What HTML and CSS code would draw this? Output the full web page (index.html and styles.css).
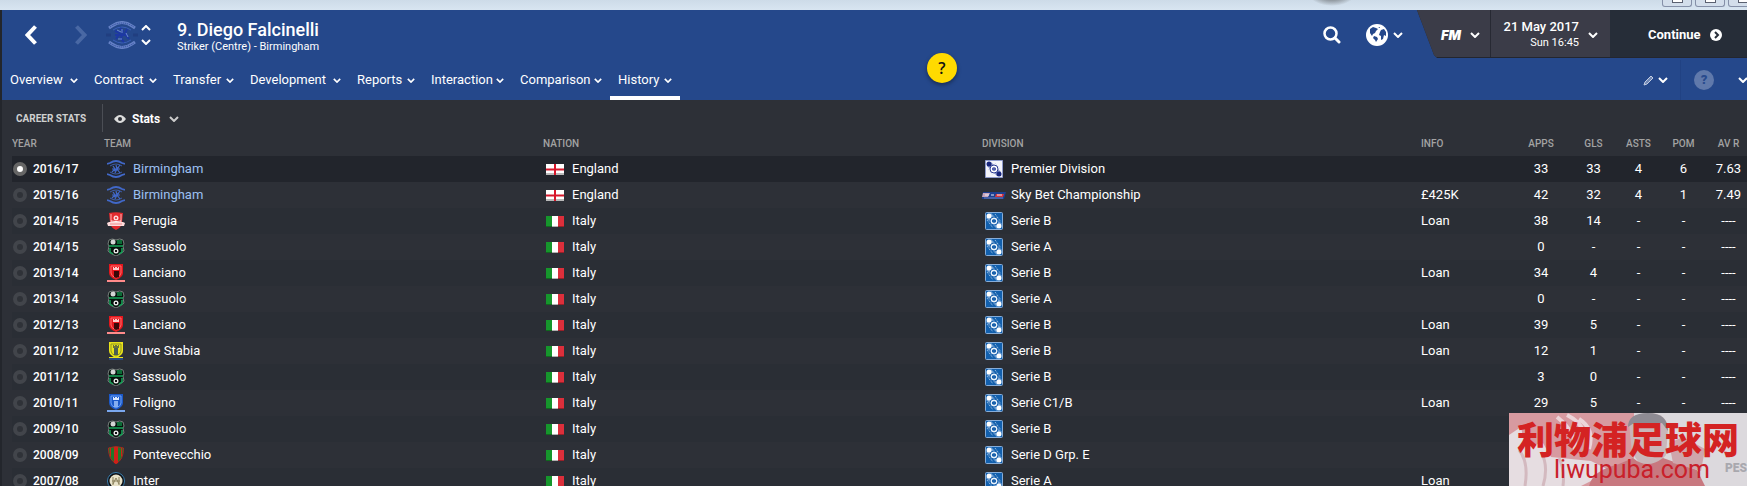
FILE: index.html
```
<!DOCTYPE html>
<html lang="en">
<head>
  <meta charset="UTF-8">
  <meta name="viewport" content="width=device-width, initial-scale=1.0">
  <title>Diego Falcinelli - History</title>
  <link rel="stylesheet" href="styles.css">
</head>
<body>

<!-- shared icons -->
<svg class="sprite" width="0" height="0" aria-hidden="true">
  <symbol id="chev" viewBox="0 0 10 6"><path d="M1 1l4 4 4-4" fill="none" stroke="currentColor" stroke-width="2"/></symbol>
  <symbol id="birmingham" viewBox="0 0 18 18">
    <g fill="none" stroke="#4168c8">
      <path d="M0 4l3-1q6-4 12 0l3 1M0 14l3 1q6 4 12 0l3-1" stroke-width="1.800"/>
      <path d="M3 6q6-4 12 0M3 12q6 4 12 0" stroke-width=".8"/>
      <path d="M6 6l2 3-3 3M9 5l1 4-2 4M13 5l-3 4 3 4M5 9h8M7 11l5-4" stroke-width="1.200"/>
    </g>
  </symbol>
  <symbol id="perugia" viewBox="0 0 18 18">
    <path d="M2 1q7-1.500 14 0l-1 9q0 5-6 8-6-3-6-8z" fill="#e32a2e"/>
    <path d="M4 2v8M14 2v8" stroke="#ffb3b3"/><path d="M4 9q5 1 10 0" stroke="#fff" fill="none"/>
    <circle cx="9" cy="6" r="2.500" fill="#ffd9d9"/><circle cx="9" cy="6" r="1" fill="#e0282c"/>
    <path d="M0 11l2-1h14l2 1-1 3H1z" fill="#ffdcdc"/><path d="M3 12h12" stroke="#f08a8c"/>
  </symbol>
  <symbol id="sassuolo" viewBox="0 0 18 18">
    <path d="M2 2q3-2 7 0 4-2 7 0l1 4-1 2 1 5q-3 3-8 5-5-2-8-5l1-5-1-2z" fill="#06130d" stroke="#777f7c"/>
    <path d="M10 2h5v4h-5z" fill="#0d6b37"/><circle cx="6" cy="4" r="2.500" fill="#d5d5d5"/>
    <path d="M2 8h14M3 10v4l3 2M15 10v4l-3 2" stroke="#17a55a" stroke-width="1.500" fill="none"/>
    <circle cx="9" cy="13" r="2.500" fill="#e8e8e8"/><path d="M8 12l2 2M8 14l2-2" stroke="#111"/>
  </symbol>
  <symbol id="lanciano" viewBox="0 0 18 18">
    <path d="M2 0h14v9q0 4-7 7-7-3-7-7z" fill="#e4161c"/><path d="M4 2h10v7q0 3-5 5-5-2-5-5z" fill="none" stroke="#ff6d6d"/>
    <path d="M7 7h5v6l-3 1-2-1z" fill="#3a0808"/><path d="M6 3h1v1h1V3h2v1h1V3h1v3H6z" fill="#ffc9c9"/>
    <path d="M0 16h18v2H0z" fill="#ff8b8b"/>
  </symbol>
  <symbol id="stabia" viewBox="0 0 18 18">
    <path d="M2 0h14v9q0 4-7 7-7-3-7-7z" fill="#e8e21c"/><path d="M4 2h10v7q0 3-5 5-5-2-5-5z" fill="none" stroke="#8f941d"/>
    <path d="M7 6h4v7H7z" fill="#4a5d54"/><path d="M6 3h1v1h1V3h2v1h1V3h1v3H6z" fill="#6b7338"/>
    <path d="M2 15h14v1H2z" fill="#e8e21c"/><path d="M2 16h14v2H2z" fill="#28487e"/>
  </symbol>
  <symbol id="foligno" viewBox="0 0 18 18">
    <path d="M2 0h14v9q0 4-7 7-7-3-7-7z" fill="#1b58c8"/><path d="M4 2h10v7q0 3-5 5-5-2-5-5z" fill="none" stroke="#6fa2f4"/>
    <path d="M7 7h4v6H7z" fill="#86aef0"/><path d="M6 3h1v1h1V3h2v1h1V3h1v3H6z" fill="#dce9ff"/>
    <path d="M0 16h18v2H0z" fill="#7aa7ee"/>
  </symbol>
  <symbol id="pontevecchio" viewBox="0 0 18 18">
    <path d="M1.500 2Q9-1 16.500 2q0 12-7.500 15.500Q1.500 14 1.500 2z" fill="#1d7a2a" stroke="#a8291f"/>
    <path d="M7 1h4v16l-2 1-2-1zM3 2h1v9l-1-1zM14 2h1v8l-1 1z" fill="#cf2018"/>
  </symbol>
  <symbol id="inter" viewBox="0 0 18 18">
    <circle cx="9" cy="9" r="8.500" fill="#0b0d12" stroke="#3b7fae"/><circle cx="9" cy="9" r="6.500" fill="#e8e2c8"/>
    <path d="M6 5v8M12 5v8M6 12l3-6 3 6M5 9h8" stroke="#8b815c" fill="none"/>
  </symbol>
  <symbol id="england" viewBox="0 0 18 11">
    <path d="M0 0h18v11H0z" fill="#fff"/><path d="M0 9h18v2H0z" fill="#b9b9b9"/>
    <path d="M0 5.500h18M9 0v11" stroke="#d8182c" stroke-width="2"/>
  </symbol>
  <symbol id="italy" viewBox="0 0 18 11">
    <path d="M0 0h6v11H0z" fill="#16962c"/><path d="M6 0h6v11H6z" fill="#fff"/><path d="M12 0h6v11h-6z" fill="#dc2f3b"/>
    <path d="M0 10h18v1H0z" fill="#000" opacity=".3"/>
  </symbol>
  <symbol id="premier" viewBox="0 0 18 18">
    <path d="M.5.5h17v17H.5z" fill="#f4f5fb" stroke="#8f9bcb"/>
    <path d="M2 6l4-4 10 10-4 4z" fill="#8d99cb"/>
    <path d="M3 9l5 6M10 3l5 6" stroke="#c9cfe8" stroke-dasharray="1 1"/>
    <circle cx="4" cy="4" r="2.500" fill="#17257c"/><circle cx="14" cy="14" r="2.500" fill="#17257c"/>
    <circle cx="9" cy="9" r="4" fill="#fff" stroke="#2c3c93"/><path d="M9 7l2 1v2l-2 1-2-1V8z" fill="#5361ad"/>
  </symbol>
  <symbol id="serie" viewBox="0 0 18 18">
    <rect x=".5" y=".5" width="17" height="17" rx="1" fill="#1260ae" stroke="#86add9"/>
    <path d="M1 6l5-5 11 11-5 5z" fill="#6f9fd3"/>
    <path d="M2 8l6 8M10 2l6 8" stroke="#b5cfea" stroke-dasharray="1 1"/>
    <circle cx="4" cy="4" r="2.500" fill="#fff"/><circle cx="14" cy="14" r="2.500" fill="#fff"/>
    <circle cx="9" cy="9" r="4" fill="#e6f0fa" stroke="#1b62ad"/><path d="M9 7l2 1v2l-2 1-2-1V8z" fill="#1b62ad"/>
  </symbol>
  <symbol id="skybet" viewBox="0 0 24 7">
    <path d="M1 0h23l-2 7H0z" fill="#1c3f8f"/><path d="M1 1h7L6 5H0z" fill="#c8a5bb"/>
    <path d="M14 2h8l-1 3h-8z" fill="#d9333b"/><path d="M3 3h4M9 3h3M15 3h5" stroke="#e8ecf8"/>
    <path d="M2 6h19" stroke="#6c82bd"/>
  </symbol>
</svg>

<div class="titlebar">
  <span class="orb"></span>
  <div class="window-buttons">
    <button aria-label="Minimise"><i></i></button>
    <button aria-label="Maximise"><i></i></button>
    <button aria-label="Close"><i></i></button>
  </div>
</div>

<header>
  <div class="top">
    <button class="back" aria-label="Back"><svg width="12" height="20" viewBox="0 0 12 20"><path d="M10.500 1.500L2.500 10l8 8.500" fill="none" stroke="currentColor" stroke-width="4"/></svg></button>
    <button class="forward" aria-label="Forward"><svg width="12" height="20" viewBox="0 0 12 20"><path d="M1.500 1.500l8 8.500-8 8.500" fill="none" stroke="currentColor" stroke-width="4"/></svg></button>
    <svg class="club" width="32" height="28" viewBox="0 0 32 28">
      <g fill="none" stroke="#6682c6">
        <path d="M3 7l3-2q10-7 20 0l3 2M3 21l3 2q10 7 20 0l3-2" stroke-width="3"/>
        <path d="M4 6Q16-2 28 6M4 22q12 8 24 0" stroke="#28469a" stroke-dasharray="1 1"/>
        <path d="M7 9q9-6 18 0M7 19q9 6 18 0" stroke="#3a5fb9"/>
        <path d="M9 10l5 2-4 6M14 7l3 3-2 8 3 3M21 8l-2 5 4 5M9 14h13" stroke="#1d38a4" stroke-width="2"/>
        <path d="M11 9l4 2M16 8v4M20 12l2 4M12 18h4" stroke="#6f8cd0"/>
        <path d="M0 14h5M27 14h5" stroke="#213e80" stroke-width="3"/>
      </g>
    </svg>
    <div class="switch">
      <button aria-label="Previous player"><svg class="flip" width="10" height="6"><use href="#chev"/></svg></button>
      <button aria-label="Next player"><svg width="10" height="6"><use href="#chev"/></svg></button>
    </div>
    <div class="player">
      <h1>9. Diego Falcinelli</h1>
      <p>Striker (Centre) - Birmingham</p>
    </div>

    <button class="search" aria-label="Search"><svg width="18" height="18" viewBox="0 0 18 18"><circle cx="7.500" cy="7.500" r="6" fill="none" stroke="#fff" stroke-width="2.500"/><path d="M12 12l4 4" stroke="#fff" stroke-width="3" stroke-linecap="round"/></svg></button>
    <button class="world" aria-label="World">
      <svg width="22" height="22" viewBox="0 0 22 22"><circle cx="11" cy="11" r="11" fill="#fff"/><path d="M4 5l3-2 3 1 2 1-2 2-1 2-2 1-1 2-2-3zM8 12l3 1 1 2-2 3-1-2-2-2zM14 8l1-2 3-1 2 3v4l-2-1-1 4-2 1v-4l-2-1zM12 3l2 0v1z" fill="#25488b"/></svg>
      <svg width="10" height="6"><use href="#chev"/></svg>
    </button>
    <div class="menu">
      <button class="fm">FM <svg width="10" height="6"><use href="#chev"/></svg></button>
      <button class="date">
        <span><strong>21 May 2017</strong><small>Sun 16:45</small></span>
        <svg width="10" height="6"><use href="#chev"/></svg>
      </button>
      <button class="continue">Continue
        <svg width="12" height="12" viewBox="0 0 12 12"><circle cx="6" cy="6" r="6" fill="#fff"/><path d="M5 3l3 3-3 3" fill="none" stroke="#262d38" stroke-width="2"/></svg>
      </button>
    </div>
  </div>

  <div class="bar">
    <nav>
      <a href="#">Overview <svg width="8" height="5"><use href="#chev"/></svg></a>
      <a href="#">Contract <svg width="8" height="5"><use href="#chev"/></svg></a>
      <a href="#">Transfer <svg width="8" height="5"><use href="#chev"/></svg></a>
      <a href="#">Development <svg width="8" height="5"><use href="#chev"/></svg></a>
      <a href="#">Reports <svg width="8" height="5"><use href="#chev"/></svg></a>
      <a href="#">Interaction <svg width="8" height="5"><use href="#chev"/></svg></a>
      <a href="#">Comparison <svg width="8" height="5"><use href="#chev"/></svg></a>
      <a href="#" class="active">History <svg width="8" height="5"><use href="#chev"/></svg></a>
    </nav>
    <div class="tools">
      <button class="edit" aria-label="Edit">
        <svg width="11" height="11" viewBox="0 0 11 11"><path d="M1 10l1-3 6-6 2 2-6 6z" fill="#7188b5" stroke="#c3cde2"/></svg>
        <svg width="10" height="6"><use href="#chev"/></svg>
      </button>
      <button class="help" aria-label="Help"><span>?</span></button>
      <button class="more" aria-label="More"><svg width="10" height="6"><use href="#chev"/></svg></button>
    </div>
  </div>
  <button class="tip" aria-label="Tip">?</button>
</header>

<main>
  <div class="subbar">
    <h2>CAREER STATS</h2>
    <button class="view">
      <svg width="12" height="8" viewBox="0 0 12 8"><path d="M0 4q6-8 12 0-6 8-12 0z" fill="#dcdcdc"/><circle cx="6" cy="4" r="2" fill="#2d3037"/></svg>
      Stats
      <svg class="arrow" width="10" height="6"><use href="#chev"/></svg>
    </button>
  </div>

  <table>
    <thead>
      <tr>
        <th class="year">YEAR</th><th>TEAM</th><th>NATION</th><th>DIVISION</th><th class="info">INFO</th>
        <th class="apps">APPS</th><th class="num">GLS</th><th class="num">ASTS</th><th class="num">POM</th><th class="avr">AV R</th>
      </tr>
    </thead>
    <tbody>
      <tr class="selected">
        <td><label><input type="radio" name="season" checked>2016/17</label></td>
        <td class="own"><div class="cell"><svg><use href="#birmingham"/></svg>Birmingham</div></td>
        <td><div class="cell flag"><svg><use href="#england"/></svg>England</div></td>
        <td><div class="cell"><svg><use href="#premier"/></svg>Premier Division</div></td>
        <td></td><td>33</td><td>33</td><td>4</td><td>6</td><td>7.63</td>
      </tr>
      <tr>
        <td><label><input type="radio" name="season">2015/16</label></td>
        <td class="own"><div class="cell"><svg><use href="#birmingham"/></svg>Birmingham</div></td>
        <td><div class="cell flag"><svg><use href="#england"/></svg>England</div></td>
        <td><div class="cell sky"><svg><use href="#skybet"/></svg>Sky Bet Championship</div></td>
        <td>£425K</td><td>42</td><td>32</td><td>4</td><td>1</td><td>7.49</td>
      </tr>
      <tr>
        <td><label><input type="radio" name="season">2014/15</label></td>
        <td><div class="cell"><svg><use href="#perugia"/></svg>Perugia</div></td>
        <td><div class="cell flag"><svg><use href="#italy"/></svg>Italy</div></td>
        <td><div class="cell"><svg><use href="#serie"/></svg>Serie B</div></td>
        <td>Loan</td><td>38</td><td>14</td><td>-</td><td>-</td><td>----</td>
      </tr>
      <tr>
        <td><label><input type="radio" name="season">2014/15</label></td>
        <td><div class="cell"><svg><use href="#sassuolo"/></svg>Sassuolo</div></td>
        <td><div class="cell flag"><svg><use href="#italy"/></svg>Italy</div></td>
        <td><div class="cell"><svg><use href="#serie"/></svg>Serie A</div></td>
        <td></td><td>0</td><td>-</td><td>-</td><td>-</td><td>----</td>
      </tr>
      <tr>
        <td><label><input type="radio" name="season">2013/14</label></td>
        <td><div class="cell"><svg><use href="#lanciano"/></svg>Lanciano</div></td>
        <td><div class="cell flag"><svg><use href="#italy"/></svg>Italy</div></td>
        <td><div class="cell"><svg><use href="#serie"/></svg>Serie B</div></td>
        <td>Loan</td><td>34</td><td>4</td><td>-</td><td>-</td><td>----</td>
      </tr>
      <tr>
        <td><label><input type="radio" name="season">2013/14</label></td>
        <td><div class="cell"><svg><use href="#sassuolo"/></svg>Sassuolo</div></td>
        <td><div class="cell flag"><svg><use href="#italy"/></svg>Italy</div></td>
        <td><div class="cell"><svg><use href="#serie"/></svg>Serie A</div></td>
        <td></td><td>0</td><td>-</td><td>-</td><td>-</td><td>----</td>
      </tr>
      <tr>
        <td><label><input type="radio" name="season">2012/13</label></td>
        <td><div class="cell"><svg><use href="#lanciano"/></svg>Lanciano</div></td>
        <td><div class="cell flag"><svg><use href="#italy"/></svg>Italy</div></td>
        <td><div class="cell"><svg><use href="#serie"/></svg>Serie B</div></td>
        <td>Loan</td><td>39</td><td>5</td><td>-</td><td>-</td><td>----</td>
      </tr>
      <tr>
        <td><label><input type="radio" name="season">2011/12</label></td>
        <td><div class="cell"><svg><use href="#stabia"/></svg>Juve Stabia</div></td>
        <td><div class="cell flag"><svg><use href="#italy"/></svg>Italy</div></td>
        <td><div class="cell"><svg><use href="#serie"/></svg>Serie B</div></td>
        <td>Loan</td><td>12</td><td>1</td><td>-</td><td>-</td><td>----</td>
      </tr>
      <tr>
        <td><label><input type="radio" name="season">2011/12</label></td>
        <td><div class="cell"><svg><use href="#sassuolo"/></svg>Sassuolo</div></td>
        <td><div class="cell flag"><svg><use href="#italy"/></svg>Italy</div></td>
        <td><div class="cell"><svg><use href="#serie"/></svg>Serie B</div></td>
        <td></td><td>3</td><td>0</td><td>-</td><td>-</td><td>----</td>
      </tr>
      <tr>
        <td><label><input type="radio" name="season">2010/11</label></td>
        <td><div class="cell"><svg><use href="#foligno"/></svg>Foligno</div></td>
        <td><div class="cell flag"><svg><use href="#italy"/></svg>Italy</div></td>
        <td><div class="cell"><svg><use href="#serie"/></svg>Serie C1/B</div></td>
        <td>Loan</td><td>29</td><td>5</td><td>-</td><td>-</td><td>----</td>
      </tr>
      <tr>
        <td><label><input type="radio" name="season">2009/10</label></td>
        <td><div class="cell"><svg><use href="#sassuolo"/></svg>Sassuolo</div></td>
        <td><div class="cell flag"><svg><use href="#italy"/></svg>Italy</div></td>
        <td><div class="cell"><svg><use href="#serie"/></svg>Serie B</div></td>
        <td></td><td></td><td></td><td></td><td></td><td></td>
      </tr>
      <tr>
        <td><label><input type="radio" name="season">2008/09</label></td>
        <td><div class="cell"><svg><use href="#pontevecchio"/></svg>Pontevecchio</div></td>
        <td><div class="cell flag"><svg><use href="#italy"/></svg>Italy</div></td>
        <td><div class="cell"><svg><use href="#serie"/></svg>Serie D Grp. E</div></td>
        <td></td><td></td><td></td><td></td><td></td><td></td>
      </tr>
      <tr>
        <td><label><input type="radio" name="season">2007/08</label></td>
        <td><div class="cell"><svg><use href="#inter"/></svg>Inter</div></td>
        <td><div class="cell flag"><svg><use href="#italy"/></svg>Italy</div></td>
        <td><div class="cell"><svg><use href="#serie"/></svg>Serie A</div></td>
        <td>Loan</td><td></td><td></td><td></td><td></td><td></td>
      </tr>
    </tbody>
  </table>
</main>

<aside class="watermark">
  <svg class="photo" viewBox="0 0 238 73" preserveAspectRatio="none" aria-hidden="true">
    <path d="M0 0h238v73H0z" fill="#dcd9dd"/>
    <path d="M0 0h125v45l-35 28H0z" fill="#d79aa0"/>
    <path d="M0 22l12-8 4 20 18-4 8 14 40 4 20 10-30 15H0z" fill="#e6dde1"/>
    <path d="M48 4q20 16 18 34M58 2q24 12 18 40M70 6q16 10 10 30" fill="none" stroke="#ecd5d9" stroke-width="4"/>
    <path d="M16 73q4-24-6-36M34 73q6-20-2-34M54 73q2-16-4-28" fill="none" stroke="#d3b9bf" stroke-width="3"/>
    <path d="M120 10q4-10 20-10 18 0 19 16l-2 26-10 12h-14l-10-14z" fill="#c9b7ba"/>
    <path d="M119 14q0-14 20-14 20 0 20 18l-6-8-14 2-14-2z" fill="#8e8b93"/>
    <path d="M80 73q4-16 30-22l14-6q14 12 30 0l34 12 8 16z" fill="#c8787f"/>
    <path d="M160 30l14-6 22 12-4 22-28-8z" fill="#cfa5ab"/>
  </svg>
  <span class="pes">PES</span>
  <strong>利物浦足球网</strong>
  <span class="site">liwupuba.com</span>
</aside>

</body>
</html>
```
FILE: styles.css
```
:root {
  --blue: #25488b;
  --bg-color: #2d3037;
  --row-alt: #2a2e35;
  --text-color: #fff;
  --muted: #a3a3a3;
  --menu: #3b3c48;
}

* {
  box-sizing: border-box;
}

body {
  margin: 0;
  height: 100vh;
  overflow: hidden;
  position: relative;
  background: var(--bg-color);
  color: var(--text-color);
  font-family: Roboto, "Open Sans", sans-serif;
  font-size: 13px;
  line-height: 16px;
}

.sprite {
  position: absolute;
}

button {
  padding: 0;
  border: 0;
  background: none;
  color: inherit;
  font: inherit;
  cursor: pointer;
  display: flex;
  align-items: center;
}

svg {
  flex: none;
}

/* window title bar */
.titlebar {
  position: relative;
  display: flex;
  justify-content: flex-end;
  height: 10px;
  overflow: hidden;
  background: linear-gradient(#cddbe8, #d8e5f1);
}

.orb {
  position: absolute;
  right: 390px;
  bottom: 4px;
  width: 50px;
  height: 30px;
  border-radius: 50%;
  background: radial-gradient(closest-side, #777e85, #8f979e 60%, transparent);
}

.window-buttons {
  display: flex;
  gap: 3px;
  margin-right: -11px;
}

.window-buttons button {
  width: 30px;
  height: 7px;
  justify-content: center;
  align-items: flex-start;
  border: 1px solid #8590a8;
  border-top: 0;
  border-radius: 0 0 3px 3px;
  background: #d3deeb;
}

.window-buttons i {
  width: 11px;
  height: 3px;
  border: 1px solid #5a6070;
  border-top: 0;
  background: #fff;
}

/* header */
header {
  position: relative;
  border-left: 2px solid #23262c;
  background: var(--blue);
}

.top {
  display: flex;
  height: 48px;
}

.back, .forward {
  width: 50px;
  height: 50px;
  padding-left: 23px;
}

.forward {
  color: #4968a4;
}

.club {
  margin: 11px 3px 0 4px;
}

.switch {
  display: flex;
  flex-direction: column;
  gap: 8px;
  margin: 15px 26px 0 0;
}

.flip {
  transform: rotate(180deg);
}

.player {
  flex: 1;
  padding-top: 10px;
}

h1, .player p, h2 {
  margin: 0;
}

h1 {
  font-size: 18px;
  font-weight: 500;
  line-height: 20px;
}

.player p {
  font-size: 11px;
  line-height: 14px;
}

.search {
  height: 50px;
  margin-right: 25px;
}

.world {
  height: 50px;
  gap: 5px;
  margin-right: 14px;
}

.menu {
  display: flex;
  width: 330px;
  height: 48px;
  background: #23262f;
  clip-path: polygon(0 0, 100% 0, 100% 100%, 20px 100%, 17px 45px);
}

.menu button {
  height: 47px;
  padding-top: 3px;
}

.menu .fm {
  width: 74px;
  gap: 9px;
  padding-left: 24px;
  border-right: 1px solid #272933;
  background: var(--menu);
  font-family: Inter, sans-serif;
  font-size: 13px;
  font-style: italic;
  font-weight: 900;
}

.menu .date {
  width: 119px;
  justify-content: flex-end;
  gap: 9px;
  padding-right: 12px;
  background: var(--menu);
  text-align: right;
}

.date strong, .date small {
  display: block;
}

.date strong {
  font-weight: 500;
}

.date small {
  font-size: 11px;
}

.menu .continue {
  flex: 1;
  gap: 9px;
  padding-left: 38px;
  background: #262d38;
  font-weight: 700;
}

.bar {
  display: flex;
  justify-content: space-between;
  height: 42px;
}

nav {
  display: grid;
  grid-template-columns: 84px 79px 77px 107px 74px 89px 98px 70px;
}

nav a {
  display: flex;
  justify-content: space-between;
  align-items: center;
  padding: 6px 8px 0;
  border-bottom: 4px solid transparent;
  color: inherit;
  text-decoration: none;
}

nav .active {
  border-color: #fff;
}

.tools {
  display: flex;
  overflow: hidden;
  padding-top: 2px;
}

.edit {
  gap: 4px;
  padding-right: 12px;
  border-right: 1px solid #214283;
}

.help {
  width: 46px;
  justify-content: center;
}

.help span {
  width: 20px;
  height: 20px;
  border-radius: 50%;
  background: #6079ab;
  color: #284a8d;
  font-weight: 900;
  line-height: 20px;
}

.more {
  margin: 0 -1px 0 11px;
}

.tip {
  position: absolute;
  top: 43px;
  left: 53%;
  width: 30px;
  height: 30px;
  justify-content: center;
  border-radius: 50%;
  background: #ffda00;
  box-shadow: 0 2px 4px rgba(0, 0, 0, 0.4);
  color: #111;
  font-family: "Open Sans", sans-serif;
  font-size: 16px;
  font-weight: 600;
}

/* career stats */
main {
  border-left: 2px solid #23262c;
  padding-left: 10px;
}

.subbar {
  display: flex;
  height: 32px;
  padding-top: 4px;
}

h2 {
  width: 91px;
  padding-left: 4px;
  border-right: 1px solid #4b4e55;
  color: #d0d0d0;
  font-size: 10px;
  font-weight: 700;
  line-height: 30px;
}

.view {
  gap: 6px;
  padding: 2px 0 0 11px;
  font-size: 12px;
  font-weight: 700;
}

.arrow {
  margin-left: 3px;
  color: #ccc;
}

table {
  width: 100%;
  table-layout: fixed;
  border-collapse: collapse;
}

th {
  height: 24px;
  padding: 0;
  color: var(--muted);
  font-size: 10px;
  font-weight: 500;
  text-align: left;
}

.year { width: 92px; }
.info { width: 90px; }
.apps { width: 60px; }
.num { width: 45px; }
.avr { width: 41px; }

td {
  height: 26px;
  padding: 0;
}

th:nth-child(n+6), td:nth-child(n+6) {
  text-align: center;
}

th:last-child, td:last-child {
  padding-left: 4px;
}

tbody tr:nth-child(odd) {
  background: var(--row-alt);
}

tbody tr.selected {
  background: #22252c;
}

td label {
  display: flex;
  align-items: center;
  font-size: 12px;
  font-weight: 500;
}

input[type="radio"] {
  appearance: none;
  width: 14px;
  height: 14px;
  margin: 0 6px 0 1px;
  border: 4px solid #42454b;
  border-radius: 50%;
  background: #2f3238;
}

input[type="radio"]:checked {
  border-color: #666;
  background: #fff;
}

.cell {
  display: flex;
  align-items: center;
}

.cell svg {
  width: 18px;
  height: 18px;
  margin: 0 8px 0 3px;
}

.flag svg {
  height: 11px;
}

.sky svg {
  width: 24px;
  height: 7px;
  margin: 0 5px 0 0;
}

.own {
  color: #9cc0f2;
}

/* site badge over the table */
.watermark {
  position: absolute;
  right: 0;
  bottom: 0;
  width: 238px;
  height: 73px;
  overflow: hidden;
  color: #d42323;
  text-align: center;
}

.photo {
  position: absolute;
  inset: 0;
  width: 100%;
  height: 100%;
}

.watermark strong {
  position: relative;
  display: block;
  padding-top: 6px;
  font-family: "Noto Sans CJK SC", sans-serif;
  font-size: 37px;
  font-weight: 900;
  line-height: 38px;
}

.site {
  position: relative;
  display: block;
  padding: 3px 0 0 8px;
  color: #c9202a;
  font-size: 25px;
  line-height: 20px;
}

.pes {
  position: absolute;
  right: 0;
  bottom: 10px;
  color: #a9a8ae;
  font-size: 12px;
  font-weight: 900;
}
```
